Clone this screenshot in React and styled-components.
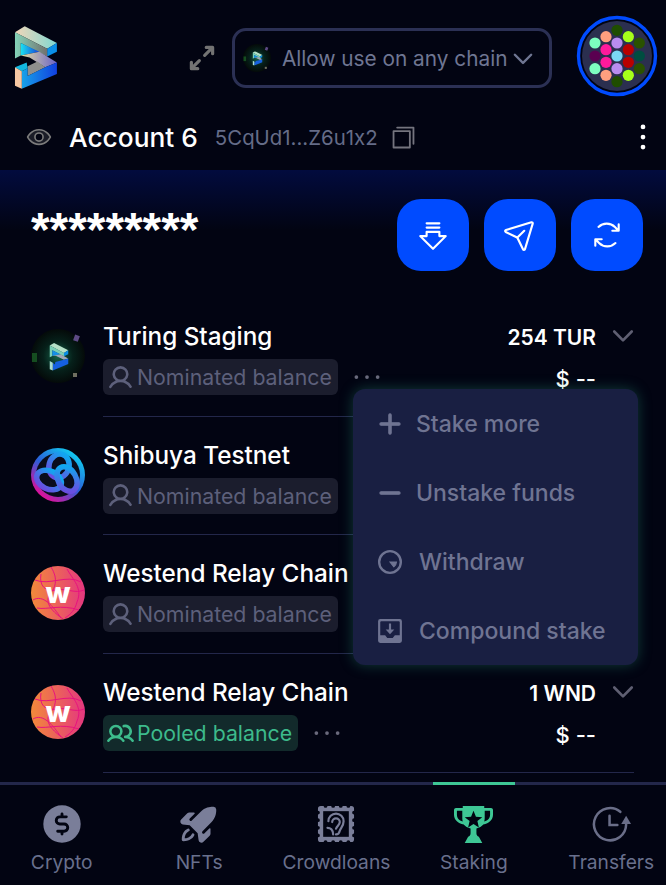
import React from "react";
import styled, { createGlobalStyle } from "styled-components";
import {
  PiArrowFatLinesDown,
  PiArrowsClockwise,
  PiArrowsOutSimpleBold,
  PiCaretDownBold,
  PiCopySimple,
  PiCurrencyCircleDollarFill,
  PiDotsThree,
  PiDotsThreeVerticalBold,
  PiEyeDuotone,
  PiMinusBold,
  PiPaperPlaneTilt,
  PiPlusBold,
  PiRocketLaunchFill,
  PiUserBold,
  PiUsersBold,
} from "react-icons/pi";

const GlobalStyle = createGlobalStyle`
  html, body {
    margin: 0;
    padding: 0;
    background: #020412;
  }
  * {
    box-sizing: border-box;
  }
`;

const Page = styled.div`
  position: relative;
  width: 666px;
  height: 885px;
  overflow: hidden;
  display: flex;
  flex-direction: column;
  background: #020412;
  color: #fff;
  font-family: Inter, "Noto Sans", sans-serif;
  font-feature-settings: "calt" 0;
`;

const Header = styled.header`
  height: 112px;
  flex: none;
  display: flex;
  align-items: center;
  padding: 0 8px 0 14px;
`;

const LogoSlot = styled.div`
  width: 44px;
  height: 64px;
  margin-top: 3px;
`;

const ExpandButton = styled.div`
  display: flex;
  margin: 4px 0 0 127px;
  color: #737373;
  font-size: 34px;
`;

const ChainSelect = styled.div`
  width: 321px;
  height: 60px;
  margin-left: 13px;
  margin-top: 4px;
  padding: 0 0 0 8px;
  display: flex;
  align-items: center;
  border: 3px solid #2b3054;
  border-radius: 14px;
  color: #6f7692;
  font-size: 20.8px;
  white-space: nowrap;

  svg {
    flex: none;
  }
`;

const ChainText = styled.span`
  margin: 0 2px 0 11px;
`;

const AvatarRing = styled.div`
  width: 82px;
  height: 82px;
  margin-left: 24px;
`;

const AccountRow = styled.div`
  height: 58px;
  flex: none;
  display: flex;
  align-items: center;
  padding: 0 4px 8px 26px;
`;

const EyeIcon = styled.span`
  display: flex;
  color: #7b7b7b;
  font-size: 26px;
`;

const AccountName = styled.span`
  margin-left: 17px;
  font-size: 26.3px;
  font-weight: 500;
`;

const Address = styled.span`
  margin-left: 17px;
  color: #656c88;
  font-size: 20.4px;
`;

const CopyIcon = styled.span`
  display: flex;
  margin-left: 11px;
  color: #74747e;
  font-size: 29px;
`;

const MoreIcon = styled.span`
  display: flex;
  margin-left: auto;
  font-size: 38px;
`;

const BalanceBar = styled.div`
  height: 128px;
  flex: none;
  display: flex;
  justify-content: space-between;
  padding: 29px 23px 0 31px;
  background: linear-gradient(180deg, #020b3e 0, #020412 60px);
`;

const HiddenBalance = styled.div`
  padding-top: 5px;
  font-family: "Liberation Sans", sans-serif;
  font-size: 47.8px;
  font-weight: 700;
  line-height: 52px;
`;

const ActionGroup = styled.div`
  display: flex;
  gap: 15px;
`;

const ActionButton = styled.div`
  width: 72px;
  height: 72px;
  border-radius: 24px;
  background: #004bff;
  display: flex;
  align-items: center;
  justify-content: center;
  font-size: 34px;
`;

const List = styled.div`
  flex: 1;
  padding: 0 32px 0 31px;
`;

const Row = styled.div`
  height: 118.7px;
  display: flex;
  align-items: center;
  gap: 18px;
`;

const ChainIcon = styled.div`
  width: 54px;
  height: 54px;
  flex: none;
  margin-top: -3px;
`;

const RowBody = styled.div`
  flex: 1;
  align-self: stretch;
  display: flex;
  justify-content: space-between;
  padding-top: 22px;
  border-bottom: 1px solid #23274a;
`;

const RowLeft = styled.div`
  display: flex;
  flex-direction: column;
  gap: 7px;
`;

const ChainName = styled.div`
  font-size: 24.3px;
  font-weight: 500;
  line-height: 32px;
  white-space: nowrap;
`;

const ChipLine = styled.div`
  display: flex;
  align-items: center;
  gap: 9px;
`;

const Chip = styled.div`
  height: 36px;
  padding: 0 6px 0 4px;
  display: flex;
  align-items: center;
  gap: 3px;
  border-radius: 6px;
  background: ${(p) => (p.$pooled ? "#122a2b" : "#1b1d2d")};
  color: ${(p) => (p.$pooled ? "#3dbb8c" : "#5d607b")};
  font-size: 21.3px;
  white-space: nowrap;

  svg {
    font-size: 27px;
    flex: none;
  }
`;

const RowDots = styled.span`
  display: flex;
  align-items: center;
  height: 36px;
  color: #6a6a7c;
  font-size: 40px;

  svg {
    flex: none;
  }
`;

const RowRight = styled.div`
  display: flex;
  flex-direction: column;
  align-items: flex-end;
  padding: 2px 38px 0 0;
  position: relative;
`;

const Amount = styled.div`
  font-size: 21px;
  font-weight: 600;
  line-height: 32px;
  white-space: nowrap;
`;

const Fiat = styled.div`
  margin-top: 9px;
  font-size: 22px;
  font-weight: 500;
  line-height: 32px;
`;

const RowCaret = styled.span`
  position: absolute;
  top: 1px;
  right: -3px;
  display: flex;
  color: #5f5f72;
  font-size: 28px;
`;

const Menu = styled.div`
  position: absolute;
  top: 389px;
  left: 353px;
  width: 285px;
  height: 276px;
  border-radius: 12px;
  background: #191f42;
  box-shadow: 0 0 14px rgba(42, 160, 130, 0.35);
`;

const MenuItem = styled.div`
  height: 69px;
  display: flex;
  align-items: center;
  gap: ${(p) => p.$gap}px;
  padding-left: 24px;
  color: #6f7492;
  font-size: 23px;
  font-weight: 500;

  svg {
    width: 26px;
    height: 26px;
    flex: none;
  }
`;

const TabBar = styled.nav`
  height: 103px;
  flex: none;
  display: grid;
  grid-template-columns: repeat(5, 137.4px);
  margin-left: -7px;
  width: 687px;
  border-top: 3px solid #23274a;
`;

const Tab = styled.div`
  position: relative;
  display: flex;
  flex-direction: column;
  align-items: center;
  padding-top: 19px;
  gap: 6px;
  color: ${(p) => (p.$active ? "#3ec795" : "#7a7e99")};

  ${(p) =>
    p.$active &&
    `&::before {
      content: "";
      position: absolute;
      top: -3px;
      left: 28px;
      width: 82px;
      height: 3px;
      background: #3ec795;
    }`}
`;

const TabIcon = styled.span`
  width: 40px;
  height: 40px;
  display: flex;
  align-items: center;
  justify-content: center;

  svg {
    width: ${(p) => p.$size}px;
    height: ${(p) => p.$size}px;
    flex: none;
  }
`;

const TabLabel = styled.span`
  color: #69708d;
  font-size: 19.2px;
  white-space: nowrap;
`;

const Logo = ({ id }) => (
  <svg width="100%" height="100%" viewBox="14 26 45 65" style={{ display: "block" }}>
    <defs>
      <linearGradient id={`${id}a`} x1="0" y1="0" x2="1" y2="0">
        <stop offset="0" stopColor="#f2d6b8" />
        <stop offset="1" stopColor="#7fd8d2" />
      </linearGradient>
      <linearGradient id={`${id}b`} x1="0" y1="0" x2="1" y2="0">
        <stop offset="0" stopColor="#84d3b8" />
        <stop offset="1" stopColor="#70706e" />
      </linearGradient>
      <linearGradient id={`${id}c`} x1="0" y1="0" x2="1" y2="0">
        <stop offset="0" stopColor="#1be0f0" />
        <stop offset="1" stopColor="#1540d8" />
      </linearGradient>
      <linearGradient id={`${id}d`} x1="0" y1="0" x2="1" y2="0">
        <stop offset="0" stopColor="#e2dca0" />
        <stop offset="1" stopColor="#6a63c8" />
      </linearGradient>
      <linearGradient id={`${id}e`} x1="0" y1="0" x2="1" y2="0">
        <stop offset="0" stopColor="#17a2e8" />
        <stop offset="1" stopColor="#1140e0" />
      </linearGradient>
    </defs>
    <polygon points="15,32 25,26 58,43 48,49" fill={`url(#${id}a)`} />
    <polygon points="48,49 58,43 58,52 48,57" fill="#0a8fe8" />
    <polygon points="15,32 48,49 48,57 21,43 21,56 15,59" fill={`url(#${id}b)`} />
    <polygon points="21,43 40,52 21,56" fill={`url(#${id}c)`} />
    <polygon points="21,56 40,52 58,63 46,68 30,58" fill={`url(#${id}d)`} />
    <polygon points="28,67 38,62 46,68 28,77" fill="#8f8f8c" />
    <polygon points="22,72 28,69 28,77 46,68 58,63 58,75 22,90" fill={`url(#${id}e)`} />
    <polygon points="15,68 27,63 28,69 22,72" fill="#12b8e0" />
    <polygon points="15,68 22,72 22,90 15,87" fill="#f6c7a2" />
  </svg>
);

// small version of the logo on its dark glowing disc
const TuringIcon = ({ id, size }) => (
  <svg width={size} height={size} viewBox="0 0 54 54" style={{ display: "block" }}>
    <defs>
      <radialGradient id={`${id}g`}>
        <stop offset="0" stopColor="#15634a" />
        <stop offset="0.55" stopColor="#06201a" />
        <stop offset="1" stopColor="#040a09" />
      </radialGradient>
    </defs>
    <circle cx="27" cy="27" r="27" fill={`url(#${id}g)`} />
    <rect x="43" y="6" width="5" height="6" fill="#5d4a85" transform="rotate(20 45 9)" />
    <rect x="1" y="24" width="5" height="9" fill="#154d20" />
    <rect x="42" y="44" width="4" height="4" fill="#6f6f60" />
    <svg x="18" y="14" width="20" height="28" viewBox="14 26 45 65">
      <polygon points="15,32 25,26 58,43 48,49" fill="#b5e0c8" />
      <polygon points="48,49 58,43 58,52 48,57" fill="#0a8fe8" />
      <polygon points="15,32 48,49 48,57 21,43 21,56 15,59" fill="#7bd0b8" />
      <polygon points="21,43 40,52 21,56" fill="#1590e8" />
      <polygon points="21,56 40,52 58,62 48,65 30,56" fill="#a0a8b8" />
      <polygon points="27,76 28,70 48,65 58,62 58,75 22,90 22,72" fill="#1560e0" />
      <polygon points="15,68 22,72 22,90 15,87" fill="#a8dcd0" />
    </svg>
  </svg>
);

const ShibuyaIcon = () => (
  <svg width="54" height="54" viewBox="0 0 54 54" style={{ display: "block" }}>
    <defs>
      <linearGradient id="shibRing" x1="0.8" y1="0.1" x2="0.2" y2="0.9">
        <stop offset="0" stopColor="#12c8f0" />
        <stop offset="0.5" stopColor="#2a5fd8" />
        <stop offset="1" stopColor="#e0109a" />
      </linearGradient>
      <linearGradient id="shibKnot" x1="0.7" y1="0" x2="0.3" y2="1">
        <stop offset="0" stopColor="#10a8f0" />
        <stop offset="1" stopColor="#6a4de0" />
      </linearGradient>
    </defs>
    <circle cx="27" cy="27" r="27" fill="url(#shibRing)" />
    <circle cx="27" cy="27" r="22" fill="#0a0d1c" />
    <g fill="none" stroke="url(#shibKnot)" strokeWidth="5.500">
      <ellipse cx="28" cy="18" rx="10" ry="12" transform="rotate(15 28 18)" />
      <ellipse cx="18" cy="32" rx="13" ry="9" transform="rotate(25 18 32)" />
      <ellipse cx="36" cy="31" rx="9" ry="13" transform="rotate(-30 36 31)" />
    </g>
  </svg>
);

const WestendIcon = ({ id }) => (
  <svg width="54" height="54" viewBox="0 0 54 54" style={{ display: "block" }}>
    <defs>
      <linearGradient id={`${id}w`} x1="0" y1="0" x2="1" y2="0">
        <stop offset="0" stopColor="#f28a3a" />
        <stop offset="1" stopColor="#e4377f" />
      </linearGradient>
    </defs>
    <circle cx="27" cy="27" r="27" fill={`url(#${id}w)`} />
    <g fill="none" stroke="#e8127f" strokeWidth="1">
      <path d="M4 14 C18 20 36 8 50 16" />
      <path d="M20 1 C28 14 24 22 18 30 C14 38 22 46 32 53" />
      <path d="M2 34 C12 28 22 40 30 52" />
      <path d="M36 3 C42 14 52 22 46 36 C44 44 40 48 34 52" />
      <path d="M10 8 C8 20 14 26 26 24 C36 22 44 28 53 24" />
      <path d="M6 42 C16 44 30 38 48 44" />
    </g>
    <text x="27" y="37" textAnchor="middle" fontFamily="Inter, sans-serif" fontSize="29" fontWeight="800" fill="#fff">
      w
    </text>
  </svg>
);

const avatarDots = [
  [853, 92, "#1f4d00"], [820, 111, "#ff9f7f"], [887, 111, "#a6ff1a"], [787, 130, "#7dffc0"],
  [853, 130, "#b98cf0"], [920, 130, "#2a5200"], [820, 150, "#ff1a9c"], [887, 150, "#b80000"],
  [787, 169, "#5a0050"], [853, 169, "#7ad7f5"], [920, 169, "#004d40"], [820, 188, "#ff1a9c"],
  [887, 188, "#b80000"], [787, 207, "#7dffc0"], [853, 207, "#b98cf0"], [920, 207, "#2a5200"],
  [820, 227, "#ff9f7f"], [887, 227, "#a6ff1a"], [853, 246, "#1f4d00"],
];

const Identicon = () => (
  <svg width="82" height="82" viewBox="0 0 82 82" style={{ display: "block" }}>
    <circle cx="41" cy="41" r="38.5" fill="#020412" stroke="#004bff" strokeWidth="3.400" />
    <circle cx="41" cy="41" r="35" fill="#2b2f4f" />
    {avatarDots.map(([x, y, c]) => (
      <circle key={`${x}-${y}`} cx={41 + (x - 853) / 3} cy={41 + (y - 169) / 3} r="5.600" fill={c} />
    ))}
  </svg>
);

const WithdrawIcon = () => (
  <svg viewBox="0 0 24 24" fill="none" stroke="currentColor" strokeWidth="2.200">
    <circle cx="12" cy="12" r="10" />
    <path d="M12 12 L18 12 A6 6 0 0 1 15.500 16.500 Z" fill="currentColor" strokeWidth="1" />
  </svg>
);

const CompoundIcon = () => (
  <svg viewBox="0 0 24 24" fill="currentColor">
    <path
      fillRule="evenodd"
      d="M3 1h18a2 2 0 0 1 2 2v18a2 2 0 0 1-2 2H3a2 2 0 0 1-2-2V3a2 2 0 0 1 2-2Zm0 3v12h4.500l2 2.500h5l2-2.500H21V4a1 1 0 0 0-1-1H4a1 1 0 0 0-1 1Z"
    />
    <path d="M11 5h2v5.500h3L12 15l-4-4.500h3Z" />
  </svg>
);

const StampIcon = () => (
  <svg viewBox="0 0 40 40">
    <path
      fill="#7a7e99"
      d="M4 1h3a2 2 0 0 0 4 0h4a2 2 0 0 0 4 0h4a2 2 0 0 0 4 0h4a2 2 0 0 0 4 0h1a3 3 0 0 1 3 3v2a2 2 0 0 0 0 4v4a2 2 0 0 0 0 4v4a2 2 0 0 0 0 4v4a2 2 0 0 0 0 4v2a3 3 0 0 1-3 3h-1a2 2 0 0 0-4 0h-4a2 2 0 0 0-4 0h-4a2 2 0 0 0-4 0h-4a2 2 0 0 0-4 0H4a3 3 0 0 1-3-3v-2a2 2 0 0 0 0-4v-4a2 2 0 0 0 0-4v-4a2 2 0 0 0 0-4v-4a2 2 0 0 0 0-4V4a3 3 0 0 1 3-3Z"
    />
    <rect x="6.500" y="6.500" width="27" height="27" fill="#020412" />
    <g fill="none" stroke="#7a7e99" strokeWidth="2.300" strokeLinecap="round">
      <path d="M12 17a8 8 0 0 1 16 0c0 5-3 7-4 10-.5 2-2 4-4 4" />
      <path d="M16 18a4 4 0 0 1 8 0c0 3-3 4-4 7" />
      <path d="M11 24c3 0 6 2 6 7" />
    </g>
  </svg>
);

const TrophyIcon = () => (
  <svg viewBox="0 0 40 40">
    <path
      fill="currentColor"
      d="M9 1h22v2h7c1 0 2 1 2 2v5c0 5-4 9-10 10-1.500 2-4 3.500-7 4v5c0 2 1 3 2.500 3.500L29 39H11l3.500-6.500C16 32 17 31 17 29v-5c-3-.5-5.500-2-7-4C4 19 0 15 0 10V5c0-1 1-2 2-2h7V1Zm-6 5v4c0 3 2 6 6 7-.5-2-.5-3-.5-5V6H3Zm28.500 0v6c0 2 0 3-.5 5 4-1 6-4 6-7V6h-5.500Z"
    />
    <polygon
      fill="#020412"
      points="20,6 22.500,12 29,12.500 24,16.500 25.500,23 20,19.500 14.500,23 16,16.500 11,12.500 17.500,12"
    />
  </svg>
);

const TransferIcon = () => (
  <svg viewBox="0 0 40 40" fill="none" stroke="#6a6e88" strokeWidth="2.600" strokeLinecap="round">
    <path d="M35 20 A16.500 16.500 0 1 1 29 7" />
    <path d="M18 11 V20.500 H26" />
    <path d="M35 11 L40 19.500 H30 Z" fill="#6a6e88" stroke="none" />
  </svg>
);

const rows = [
  { id: "tur", name: "Turing Staging", icon: <TuringIcon id="row" size={54} />, amount: "254 TUR" },
  { id: "sby", name: "Shibuya Testnet", icon: <ShibuyaIcon /> },
  { id: "wnd1", name: "Westend Relay Chain", icon: <WestendIcon id="w1" /> },
  { id: "wnd2", name: "Westend Relay Chain", icon: <WestendIcon id="w2" />, amount: "1 WND", pooled: true },
];

const menuItems = [
  { label: "Stake more", icon: <PiPlusBold stroke="currentColor" strokeWidth={10} />, gap: 13 },
  { label: "Unstake funds", icon: <PiMinusBold stroke="currentColor" strokeWidth={10} />, gap: 13 },
  { label: "Withdraw", icon: <WithdrawIcon />, gap: 16 },
  { label: "Compound stake", icon: <CompoundIcon />, gap: 16 },
];

const tabs = [
  { label: "Crypto", icon: <PiCurrencyCircleDollarFill />, size: 46 },
  { label: "NFTs", icon: <PiRocketLaunchFill />, size: 46 },
  { label: "Crowdloans", icon: <StampIcon />, size: 38 },
  { label: "Staking", icon: <TrophyIcon />, size: 39, active: true },
  { label: "Transfers", icon: <TransferIcon />, size: 39 },
];

const App = () => {
  return (
    <>
      <GlobalStyle />
      <Page>
        <Header>
          <LogoSlot>
            <Logo id="main" />
          </LogoSlot>
          <ExpandButton>
            <PiArrowsOutSimpleBold />
          </ExpandButton>
          <ChainSelect>
            <TuringIcon id="sel" size={28} />
            <ChainText>Allow use on any chain</ChainText>
            <PiCaretDownBold size={26} />
          </ChainSelect>
          <AvatarRing>
            <Identicon />
          </AvatarRing>
        </Header>

        <AccountRow>
          <EyeIcon>
            <PiEyeDuotone />
          </EyeIcon>
          <AccountName>Account 6</AccountName>
          <Address>5CqUd1...Z6u1x2</Address>
          <CopyIcon>
            <PiCopySimple />
          </CopyIcon>
          <MoreIcon>
            <PiDotsThreeVerticalBold />
          </MoreIcon>
        </AccountRow>

        <BalanceBar>
          <HiddenBalance>*********</HiddenBalance>
          <ActionGroup>
            <ActionButton>
              <PiArrowFatLinesDown />
            </ActionButton>
            <ActionButton>
              <PiPaperPlaneTilt />
            </ActionButton>
            <ActionButton>
              <PiArrowsClockwise />
            </ActionButton>
          </ActionGroup>
        </BalanceBar>

        <List>
          {rows.map((row) => (
            <Row key={row.id}>
              <ChainIcon>{row.icon}</ChainIcon>
              <RowBody>
                <RowLeft>
                  <ChainName>{row.name}</ChainName>
                  <ChipLine>
                    <Chip $pooled={row.pooled}>
                      {row.pooled ? <PiUsersBold /> : <PiUserBold />}
                      {row.pooled ? "Pooled balance" : "Nominated balance"}
                    </Chip>
                    {row.amount && (
                      <RowDots>
                        <PiDotsThree />
                      </RowDots>
                    )}
                  </ChipLine>
                </RowLeft>
                {row.amount && (
                  <RowRight>
                    <Amount>{row.amount}</Amount>
                    <Fiat>$ --</Fiat>
                    <RowCaret>
                      <PiCaretDownBold />
                    </RowCaret>
                  </RowRight>
                )}
              </RowBody>
            </Row>
          ))}
        </List>

        <TabBar>
          {tabs.map((tab) => (
            <Tab key={tab.label} $active={tab.active}>
              <TabIcon $size={tab.size}>{tab.icon}</TabIcon>
              <TabLabel>{tab.label}</TabLabel>
            </Tab>
          ))}
        </TabBar>

        <Menu>
          {menuItems.map((item) => (
            <MenuItem key={item.label} $gap={item.gap}>
              {item.icon}
              {item.label}
            </MenuItem>
          ))}
        </Menu>
      </Page>
    </>
  );
};

export default App;
